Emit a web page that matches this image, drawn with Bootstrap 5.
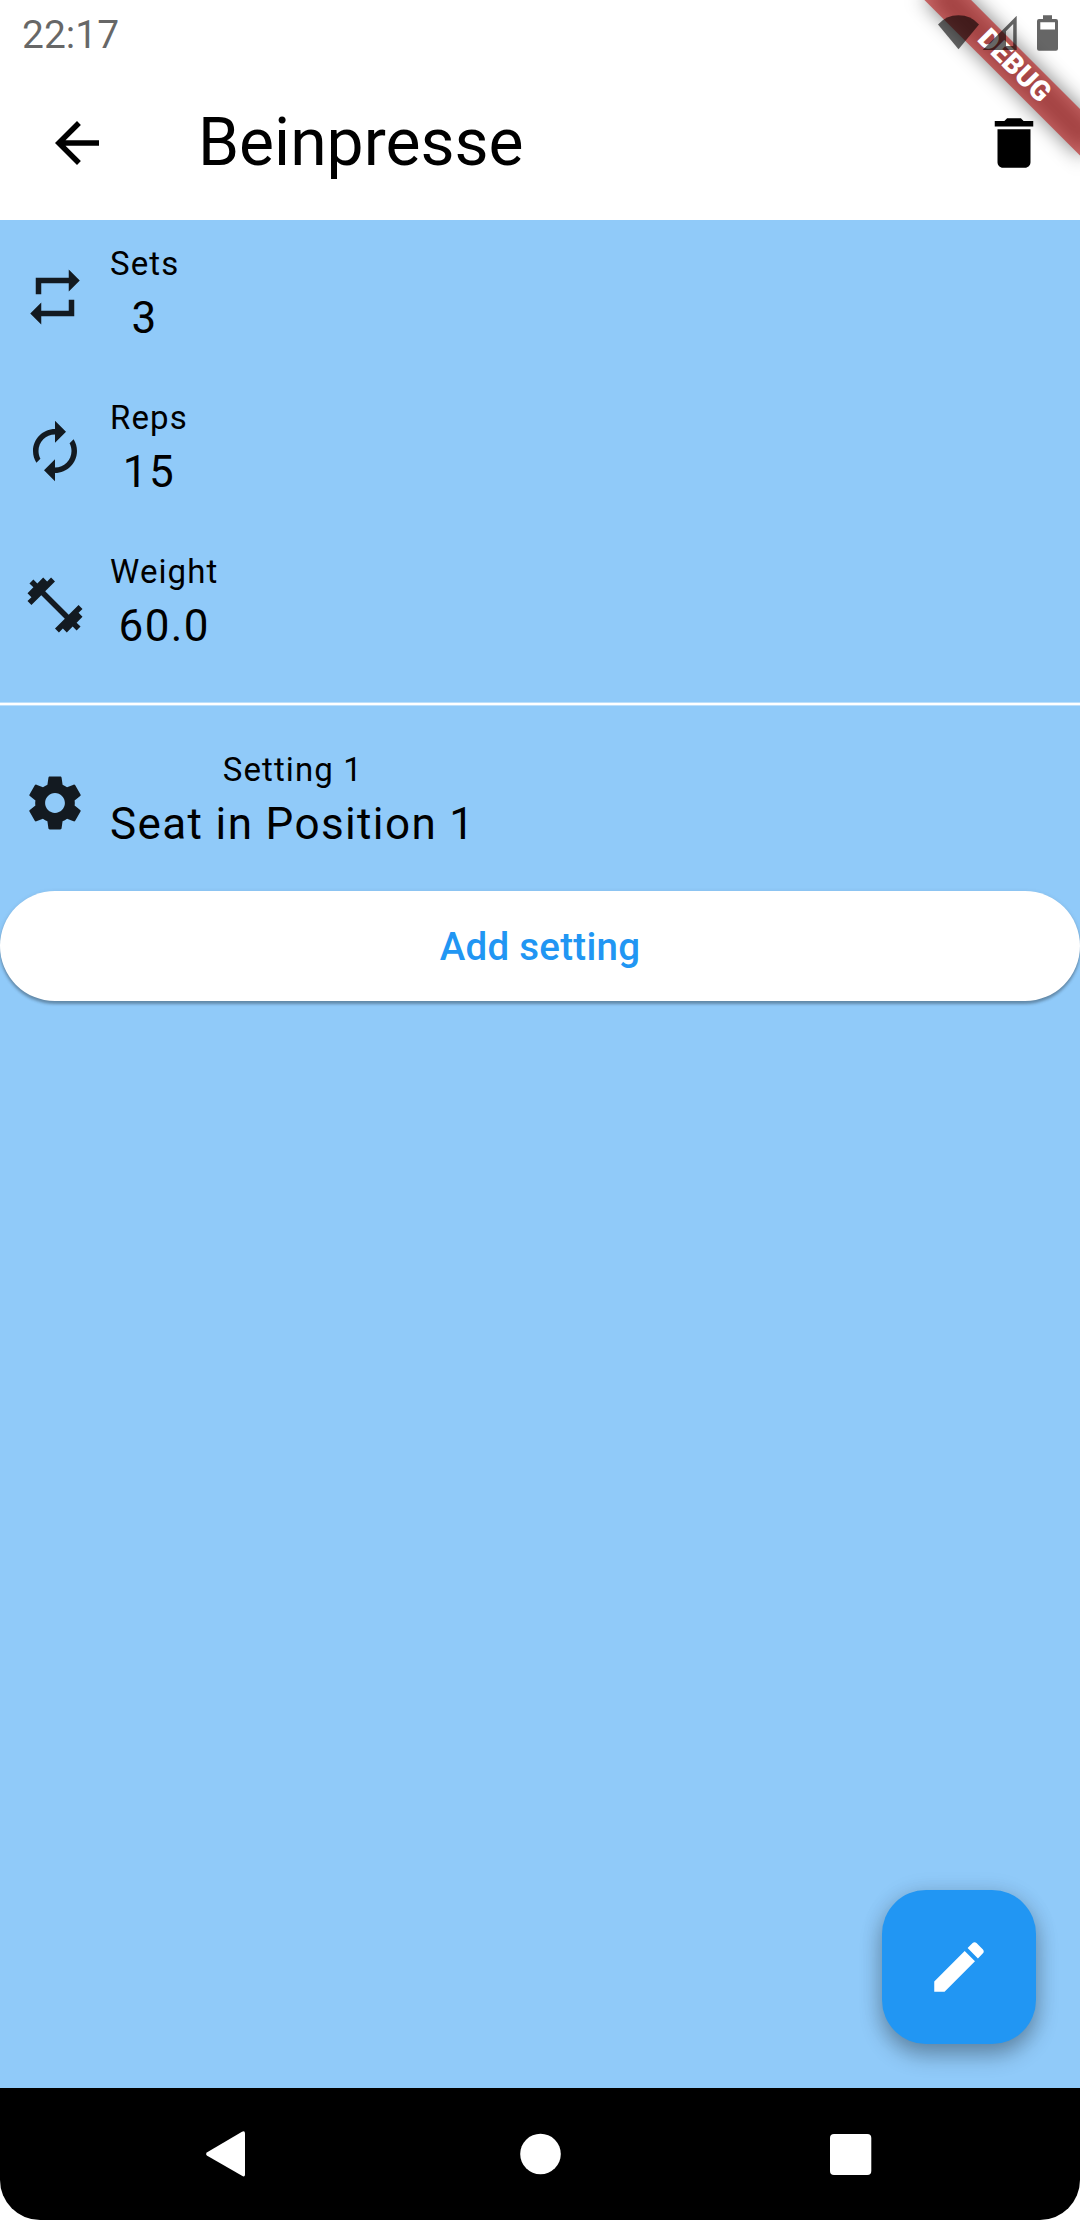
<!DOCTYPE html>
<html lang="de">
<head>
<meta charset="utf-8">
<meta name="viewport" content="width=device-width, initial-scale=1">
<title>Beinpresse</title>
<link href="https://cdn.jsdelivr.net/npm/bootstrap@5.3.0/dist/css/bootstrap.min.css" rel="stylesheet">
<style>
  body { font-family: Roboto, sans-serif; background: #fff; color: #000; }
  svg { display: block; }
  .screen { width: 1080px; height: 2220px; }
  .status-bar { height: 66px; padding: 0 22px; z-index: 3; color: rgba(0,0,0,.6); }
  .clock { font-size: 39px; line-height: 70px; }
  .app-bar { height: 154px; padding: 0 33px 0 44px; }
  .app-bar h1 { font-size: 66px; line-height: 84px; margin-left: 88px; }
  .icon-66 { width: 66px; height: 66px; fill: currentColor; flex: none; }
  .ribbon { z-index: 2; pointer-events: none; }
  .ribbon text { font: 900 28.05px Roboto, sans-serif; }
  main { background: #90caf9; }
  .entry { padding: 22px; gap: 22px; }
  .entry .icon-66 { color: rgba(0,0,0,.87); }
  .entry-label { font-size: 33px; line-height: 44px; letter-spacing: 1.1px; }
  .entry-value { font-size: 44px; line-height: 64px; padding-bottom: 2px; letter-spacing: 1.375px; }
  .split { height: 4px; margin: 20px 0; background: linear-gradient(rgba(255,255,255,.4) 1px, #fff 1px, #fff 3px, rgba(255,255,255,.4) 3px); }
  .btn-add { height: 110px; margin: 11px 0; padding: 2px 0 0; font-size: 38.5px; font-weight: 500; letter-spacing: .275px; color: #2196f3; background: #fff; border: 0;
    box-shadow: 0 3px 3px rgba(0,0,0,.28), 0 1px 5px rgba(0,0,0,.1); }
  .btn-add:hover { background: #fff; color: #2196f3; }
  .fab { width: 154px; height: 154px; margin: 0 44px 44px 0; border: 0; border-radius: 44px; background: #2196f3; color: #fff;
    box-shadow: 0 11px 22px rgba(0,0,0,.3), 0 1px 22px rgba(0,0,0,.1); }
  .nav-keys { height: 132px; background: #000; border-radius: 0 0 40px 40px; padding: 0 208px 0 206px; }
</style>
<script src="https://cdn.jsdelivr.net/npm/bootstrap@5.3.0/dist/js/bootstrap.bundle.min.js"></script>
</head>
<body>
<div class="screen d-flex flex-column position-relative overflow-hidden">
  <div class="status-bar d-flex justify-content-between position-relative">
    <span class="clock">22:17</span>
    <svg width="120" height="66" viewBox="938 0 120 66" fill="currentColor">
      <path d="M958.5 49.3 938 24.5Q946 15.3 958.5 15.3T979 24.5Z"/>
      <path fill-rule="evenodd" d="M1016.7 15.7V50H982.7ZM1013.2 24 1006 31.3V46H1013.2Z"/>
      <path fill-rule="evenodd" d="M1043 15.3h9V19h4q2 0 2 2v27.7q0 2-2 2h-17q-2 0-2-2V21q0-2 2-2h4ZM1040.3 22.3v7.2H1055v-7.2Z"/>
    </svg>
  </div>
  <svg class="ribbon position-absolute top-0 end-0" width="240" height="220">
    <defs><filter id="soft" x="-40%" y="-200%" width="180%" height="500%"><feGaussianBlur stdDeviation="10"/></filter></defs>
    <g transform="translate(240 0) rotate(45)">
      <rect x="-110" y="77" width="220" height="33" fill="#000" fill-opacity=".5" filter="url(#soft)"/>
      <rect x="-110" y="77" width="220" height="33" fill="#b71c1c" fill-opacity=".627"/>
      <text x="0" y="101.8" text-anchor="middle" fill="#fff">DEBUG</text>
    </g>
  </svg>
  <header class="app-bar d-flex align-items-center bg-white">
    <svg class="icon-66" viewBox="0 0 24 24"><path d="M20 11H7.83l5.59-5.59L12 4l-8 8 8 8 1.41-1.41L7.83 13H20v-2z"/></svg>
    <h1 class="fw-normal mb-0">Beinpresse</h1>
    <svg class="icon-66 ms-auto" viewBox="0 0 24 24"><path d="M6 19c0 1.1.9 2 2 2h8c1.1 0 2-.9 2-2V7H6v12zM19 4h-3.5l-1-1h-5l-1 1H5v2h14V4z"/></svg>
  </header>
  <main class="flex-grow-1 d-flex flex-column">
    <div class="entry d-flex align-items-center">
      <svg class="icon-66" viewBox="0 0 24 24"><path d="M7 7h10v3l4-4-4-4v3H5v6h2V7zm10 10H7v-3l-4 4 4 4v-3h12v-6h-2v4z"/></svg>
      <div class="text-center"><div class="entry-label">Sets</div><div class="entry-value">3</div></div>
    </div>
    <div class="entry d-flex align-items-center">
      <svg class="icon-66" viewBox="0 0 24 24"><path d="M12 6v3l4-4-4-4v3c-4.42 0-8 3.58-8 8 0 1.57.46 3.03 1.24 4.26L6.7 14.8c-.45-.83-.7-1.79-.7-2.8 0-3.31 2.69-6 6-6zm6.76 1.74L17.3 9.2c.44.84.7 1.79.7 2.8 0 3.31-2.69 6-6 6v-3l-4 4 4 4v-3c4.42 0 8-3.58 8-8 0-1.57-.46-3.03-1.24-4.26z"/></svg>
      <div class="text-center"><div class="entry-label">Reps</div><div class="entry-value">15</div></div>
    </div>
    <div class="entry d-flex align-items-center">
      <svg class="icon-66" viewBox="0 0 24 24"><path d="M20.57 14.86L22 13.43 20.57 12 17 15.57 8.43 7 12 3.43 10.57 2 9.14 3.43 7.71 2 5.57 4.14 4.14 2.71 2.71 4.14l1.43 1.43L2 7.71l1.43 1.43L2 10.57 3.43 12 7 8.43 15.57 17 12 20.57 13.43 22l1.43-1.43L16.29 22l2.14-2.14 1.43 1.43 1.43-1.43-1.43-1.43L22 16.29z"/></svg>
      <div class="text-center"><div class="entry-label">Weight</div><div class="entry-value">60.0</div></div>
    </div>
    <div class="split"></div>
    <div class="entry d-flex align-items-center">
      <svg class="icon-66" viewBox="0 0 24 24"><path d="M19.14 12.94c.04-.3.06-.61.06-.94 0-.32-.02-.64-.07-.94l2.03-1.58c.18-.14.23-.41.12-.61l-1.92-3.32c-.12-.22-.37-.29-.59-.22l-2.39.96c-.5-.38-1.03-.7-1.62-.94l-.36-2.54c-.04-.24-.24-.41-.48-.41h-3.84c-.24 0-.43.17-.47.41l-.36 2.54c-.59.24-1.13.57-1.62.94l-2.39-.96c-.22-.08-.47 0-.59.22L2.74 8.87c-.12.21-.08.47.12.61l2.03 1.58c-.05.3-.09.63-.09.94s.02.64.07.94l-2.03 1.58c-.18.14-.23.41-.12.61l1.92 3.32c.12.22.37.29.59.22l2.39-.96c.5.38 1.03.7 1.62.94l.36 2.54c.05.24.24.41.48.41h3.84c.24 0 .44-.17.47-.41l.36-2.54c.59-.24 1.13-.56 1.62-.94l2.39.96c.22.08.47 0 .59-.22l1.92-3.32c.12-.22.07-.47-.12-.61l-2.01-1.58zM12 15.6c-1.98 0-3.6-1.62-3.6-3.6s1.62-3.6 3.6-3.6 3.6 1.62 3.6 3.6-1.62 3.6-3.6 3.6z"/></svg>
      <div class="text-center"><div class="entry-label">Setting 1</div><div class="entry-value">Seat in Position 1</div></div>
    </div>
    <button type="button" class="btn btn-add rounded-pill w-100">Add setting</button>
    <button type="button" class="fab d-flex align-items-center justify-content-center p-0 mt-auto ms-auto" aria-label="Edit">
      <svg class="icon-66" viewBox="0 0 24 24"><path d="M3 17.25V21h3.75L17.81 9.94l-3.75-3.75L3 17.25zM20.71 7.04c.39-.39.39-1.02 0-1.41l-2.34-2.34c-.39-.39-1.02-.39-1.41 0l-1.83 1.83 3.75 3.75 1.83-1.83z"/></svg>
    </button>
  </main>
  <nav class="nav-keys d-flex align-items-center justify-content-between position-relative">
    <svg width="42" height="46" viewBox="0 0 42 46" fill="#fff"><path d="M36 .7Q39 -.8 39 2.5V43.2Q39 46.5 36 44.8L1.2 24.8Q-1 23 1.2 21.2Z"/></svg>
    <svg width="44" height="42" viewBox="0 0 44 42" fill="#fff"><circle cx="23.5" cy="21" r="20.3"/></svg>
    <svg width="42" height="42" viewBox="0 0 42 42" fill="#fff"><rect x="0" y="1" width="41.3" height="41" rx="4"/></svg>
  </nav>
</div>
</body>
</html>
